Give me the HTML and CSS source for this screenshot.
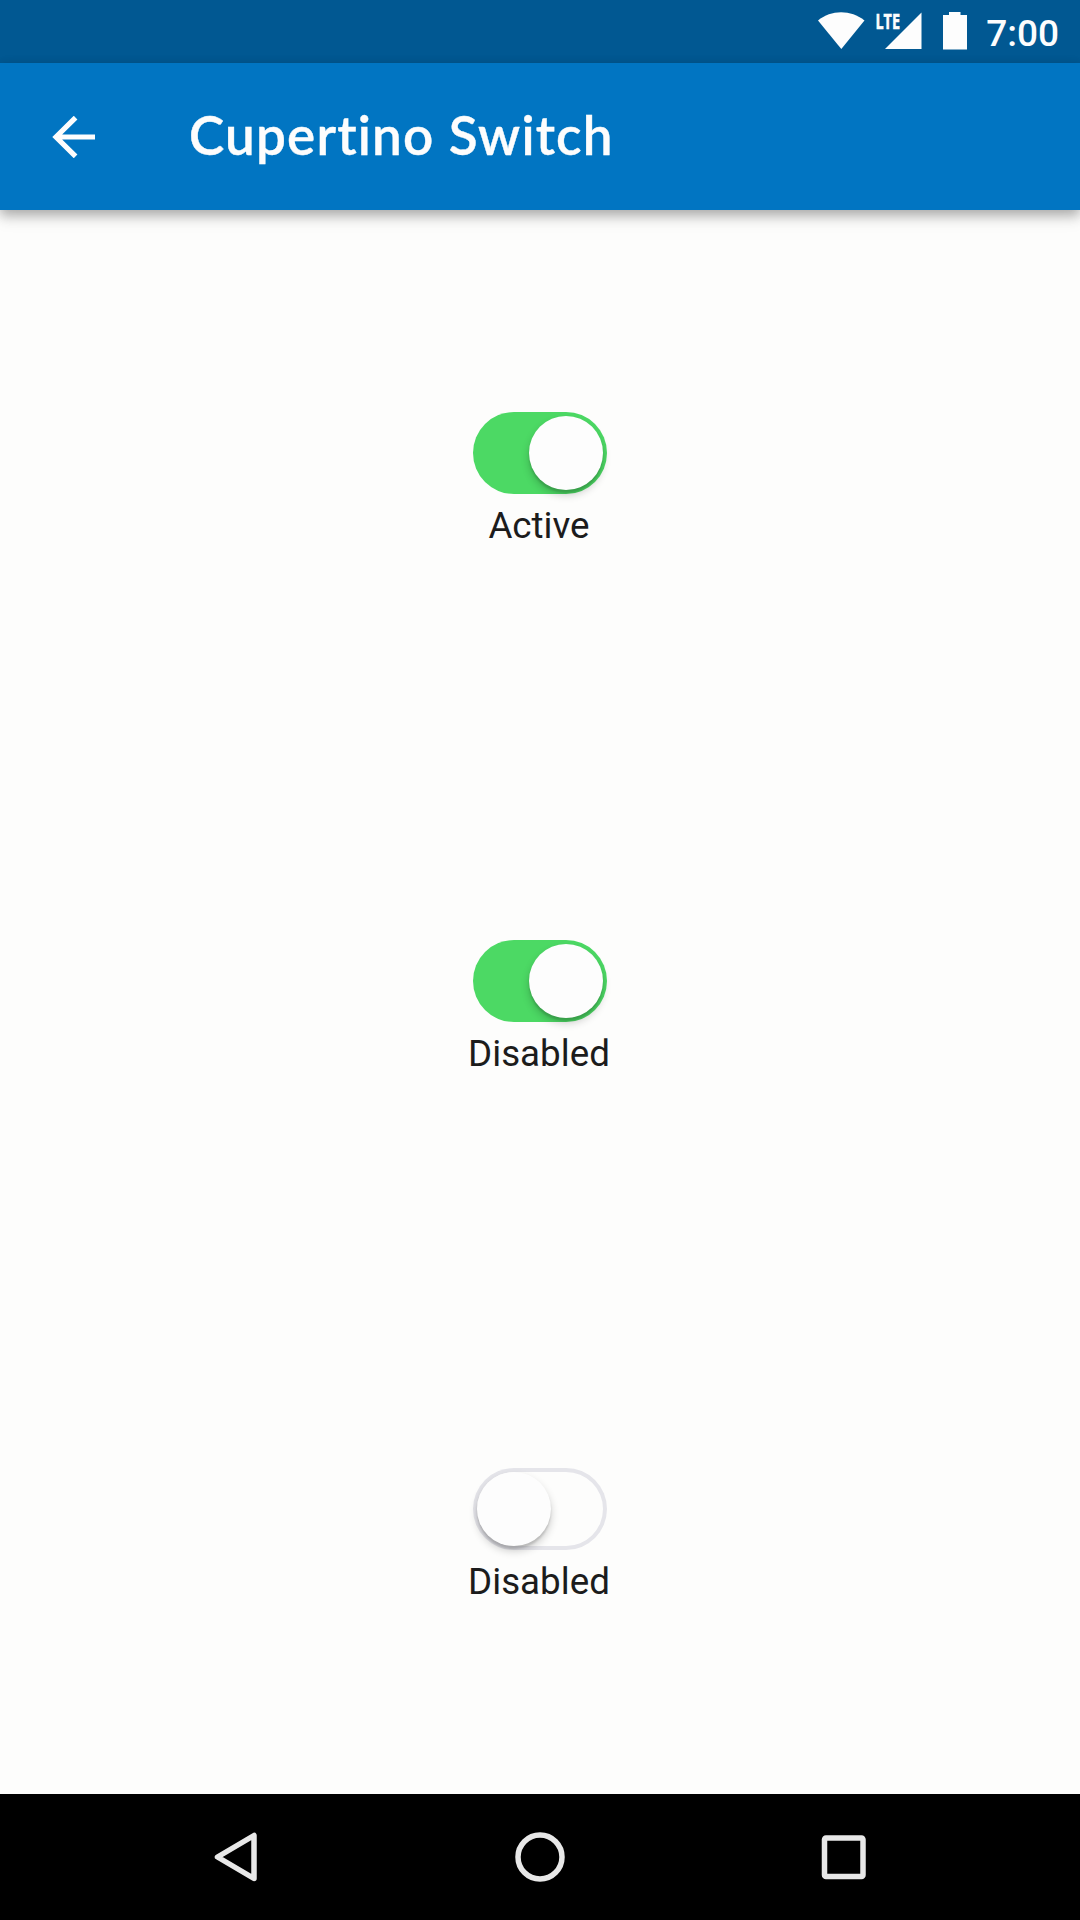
FILE: index.html
```html
<!DOCTYPE html>
<html lang="en">
<head>
<meta charset="utf-8">
<title>Cupertino Switch</title>
<link rel="stylesheet" href="styles.css">
</head>
<body>
<div class="screen">
  <div class="status-bar">
    <svg class="status-icons" width="154" height="51" viewBox="0 -12 154 51" aria-hidden="true">
      <path d="M0 8.500C13-2.500 33-2.500 46.500 8.500L23.300 37Z"/>
      <path d="M67 37H103.500V.500Z"/>
      <text class="network" x="57.500" y="17" textLength="24.500" lengthAdjust="spacingAndGlyphs">LTE</text>
      <path d="M125 3H131V0H142.500V3H149V37.500H125Z"/>
    </svg>
    <span class="clock">7:00</span>
  </div>
  <header class="app-bar">
    <svg class="back" width="43" height="42" viewBox="0 0 43 42" aria-hidden="true">
      <path d="M23.600 1.600 4 21 23.600 40.400M4 21H43"/>
    </svg>
    <h1 class="title">Cupertino Switch</h1>
  </header>
  <main class="content">
    <section class="item">
      <div class="switch on"><div class="thumb"></div></div>
      <div class="label">Active</div>
    </section>
    <section class="item">
      <div class="switch on"><div class="thumb"></div></div>
      <div class="label">Disabled</div>
    </section>
    <section class="item">
      <div class="switch off"><div class="thumb"></div></div>
      <div class="label">Disabled</div>
    </section>
  </main>
  <nav class="nav-bar">
    <svg width="50" height="50" viewBox="0 0 50 50"><path d="M43 3.500V46.500L6.500 25Z"/></svg>
    <svg width="50" height="50" viewBox="0 0 50 50"><circle cx="25" cy="25" r="22"/></svg>
    <svg width="50" height="50" viewBox="0 0 50 50"><rect x="5.500" y="6" width="38.500" height="38.500" rx="1.500"/></svg>
  </nav>
</div>
</body>
</html>
```
FILE: styles.css
```css
* {
  box-sizing: border-box;
}

body {
  margin: 0;
  font-family: Roboto, "Liberation Sans", sans-serif;
}

.screen {
  display: flex;
  flex-direction: column;
  width: 1080px;
  height: 1920px;
  overflow: hidden;
  background: #fdfdfc;
}

.status-bar {
  display: flex;
  justify-content: flex-end;
  height: 63px;
  padding-right: 21px;
  background: #015892;
  color: #fdfdfd;
}

.status-icons {
  margin-right: 14px;
  overflow: visible;
  fill: #fdfdfd;
}

.network {
  font: 700 22px "Open Sans", sans-serif;
  stroke: #fdfdfd;
  stroke-width: .6;
}

.clock {
  padding-top: 13px;
  font-size: 37px;
  font-weight: 500;
  line-height: 42px;
}

.app-bar {
  z-index: 1;
  display: flex;
  align-items: center;
  height: 147px;
  padding-left: 52px;
  background: #0175c2;
  box-shadow: 0 5px 11px rgba(0, 0, 0, .26), 0 8px 16px rgba(0, 0, 0, .1);
}

.back {
  fill: none;
  stroke: #fdfdfd;
  stroke-width: 5.2;
}

.title {
  margin: 0 0 4px 94px;
  color: #fdfdfd;
  font: 600 53px/64px Lato, sans-serif;
  font-variant-ligatures: none;
  letter-spacing: 1.2px;
  -webkit-text-stroke: .4px #fdfdfd;
  white-space: nowrap;
}

.content {
  display: flex;
  flex: 1;
  flex-direction: column;
  justify-content: space-around;
}

.item {
  display: flex;
  flex-direction: column;
  align-items: center;
  padding-top: 11px;
}

.switch {
  display: flex;
  align-items: center;
  width: 134px;
  height: 81.500px;
  margin-bottom: 10px;
  padding: 0 4px;
  border-radius: 41px;
}

.on {
  justify-content: flex-end;
  background: #4cd964;
}

.off {
  box-shadow: inset 0 0 0 4px #e5e5ea;
}

.thumb {
  width: 74px;
  height: 74px;
  border-radius: 50%;
  background: #fdfdfd;
  box-shadow: 0 5px 8px rgba(0, 0, 0, .2), 0 3px 2px rgba(0, 0, 0, .12);
}

.label {
  padding-right: 2px;
  color: #1c1c1c;
  font-size: 36.750px;
  line-height: 43px;
}

.nav-bar {
  display: flex;
  align-items: center;
  justify-content: center;
  gap: 254px;
  height: 126px;
  background: #000;
}

.nav-bar svg {
  fill: none;
  stroke: #e8e8e8;
  stroke-width: 5.500;
  stroke-linejoin: round;
}
```
